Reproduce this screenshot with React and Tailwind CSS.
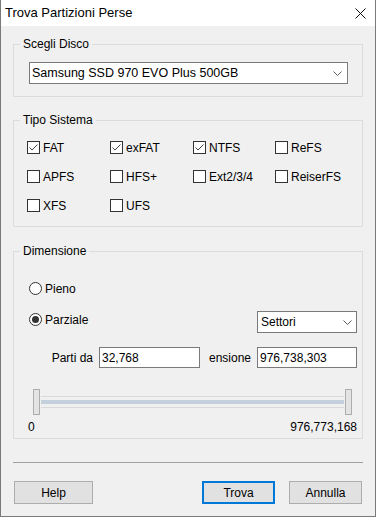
const filesystems = [
  { name: "FAT", checked: true },
  { name: "exFAT", checked: true },
  { name: "NTFS", checked: true },
  { name: "ReFS", checked: false },
  { name: "APFS", checked: false },
  { name: "HFS+", checked: false },
  { name: "Ext2/3/4", checked: false },
  { name: "ReiserFS", checked: false },
  { name: "XFS", checked: false },
  { name: "UFS", checked: false }
]

function Chevron() {
  return (
    <svg width="9" height="5" viewBox="0 0 9 5" className="shrink-0">
      <path d="M0.5 0.5 L4.5 4.5 L8.5 0.5" fill="none" stroke="#5a5a5a" strokeWidth="1" />
    </svg>
  )
}

// fieldset keeps the legend cutting the border; padding goes on the inner div
function Group({ title, className, inner, children }) {
  return (
    <fieldset className={"border border-[#dcdcdc] " + className}>
      <legend className="ml-[6px] px-[3px] h-[16px] leading-[16px] text-[12px] text-black">
        {title}
      </legend>
      <div className={inner}>{children}</div>
    </fieldset>
  )
}

function Check({ label, checked }) {
  return (
    <div className="flex items-center h-[13px]">
      <span className="w-[13px] h-[13px] border border-[#333] bg-white flex items-center justify-center shrink-0">
        {checked && (
          <svg width="11" height="11" viewBox="0 0 11 11">
            <path d="M1.5 5.5 L4 8 L9.5 2.5" fill="none" stroke="#444" strokeWidth="1" />
          </svg>
        )}
      </span>
      <span className="ml-[3px] text-[12px] leading-[16px]">{label}</span>
    </div>
  )
}

function Radio({ label, checked }) {
  return (
    <div className="flex items-center h-[13px]">
      <span className="w-[13px] h-[13px] rounded-full border border-[#333] bg-white flex items-center justify-center shrink-0">
        {checked && <span className="w-[7px] h-[7px] rounded-full bg-[#333]"></span>}
      </span>
      <span className="ml-[3px] text-[12px] leading-[16px]">{label}</span>
    </div>
  )
}

export default function App() {
  return (
    <div className="w-[376px] h-[517px] flex flex-col border-x border-b border-[#7a7a7a] bg-[#f0f0f0] text-black font-['Liberation_Sans',Arial,sans-serif] select-none">
      {/* Title bar */}
      <div className="h-[26px] bg-white flex items-center justify-between pl-[4px] pr-[9px] shrink-0">
        <span className="text-[13px] leading-[16px]">Trova Partizioni Perse</span>
        <svg width="11" height="11" viewBox="0 0 11 11">
          <path d="M0.5 0.5 L10.5 10.5 M10.5 0.5 L0.5 10.5" stroke="#111" strokeWidth="1" />
        </svg>
      </div>

      <div className="flex flex-col px-[12px]">
        {/* Scegli Disco */}
        <Group title="Scegli Disco" className="mt-[10px]" inner="pl-[15px] pr-[14px] pb-[12px]">
          <div className="mt-[10px] h-[22px] border border-[#7a7a7a] bg-white flex items-center justify-between pl-[2px] pr-[5px]">
            <span className="text-[12.5px]">Samsung SSD 970 EVO Plus 500GB</span>
            <Chevron />
          </div>
        </Group>

        {/* Tipo Sistema */}
        <Group title="Tipo Sistema" className="mt-[15px]" inner="pl-[13px] pb-[14px]">
          <div className="mt-[13px] grid grid-cols-[83px_83px_82px_auto] gap-y-[16px]">
            {filesystems.map((fs) => (
              <Check key={fs.name} label={fs.name} checked={fs.checked} />
            ))}
          </div>
        </Group>

        {/* Dimensione */}
        <Group title="Dimensione" className="mt-[16px]" inner="pl-[15px] pr-[5px] pb-[3px]">
          <div className="mt-[23px]">
            <Radio label="Pieno" />
          </div>

          <div className="mt-[16px] flex items-start justify-between">
            <div className="mt-[2px]">
              <Radio label="Parziale" checked />
            </div>
            <div className="w-[100px] h-[22px] border border-[#7a7a7a] bg-white flex items-center justify-between pl-[3px] pr-[4px]">
              <span className="text-[12px]">Settori</span>
              <Chevron />
            </div>
          </div>

          <div className="mt-[14px] flex items-center h-[21px] text-[12px]">
            <span className="w-[64px] text-right">Parti da</span>
            <div className="ml-[6px] w-[101px] h-[21px] border border-[#7a7a7a] bg-white flex items-center pl-[2px]">
              32,768
            </div>
            <span className="w-[51px] text-right">ensione</span>
            <div className="ml-[6px] w-[100px] h-[21px] border border-[#7a7a7a] bg-white flex items-center pl-[2px]">
              976,738,303
            </div>
          </div>

          {/* Slider */}
          <div className="mt-[21px] ml-[4px] mr-[5px] flex items-start h-[26px]">
            <span className="w-[7px] h-[26px] bg-[#e3e3e3] border border-[#adadad] shrink-0"></span>
            <div className="flex-1 mx-[1px] mt-[7px] flex flex-col">
              <span className="h-[1px] bg-[#d9d9d9]"></span>
              <span className="mt-[3px] h-[4px] bg-[#c4d0dc]"></span>
              <span className="mt-[3px] h-[1px] bg-[#d9d9d9]"></span>
            </div>
            <span className="w-[7px] h-[26px] bg-[#e3e3e3] border border-[#adadad] shrink-0"></span>
          </div>

          <div className="mt-[4px] -ml-[1px] flex justify-between text-[12px] leading-[16px]">
            <span>0</span>
            <span>976,773,168</span>
          </div>
        </Group>

        <div className="mt-[23px] h-[1px] bg-[#a0a0a0]"></div>

        {/* Buttons */}
        <div className="mt-[18px] flex items-center text-[12px]">
          <button className="ml-[1px] w-[79px] h-[23px] bg-[#e1e1e1] border border-[#adadad]">Help</button>
          <div className="flex-1"></div>
          <button className="w-[73px] h-[23px] bg-[#e1e1e1] border-2 border-[#0078d7]">Trova</button>
          <button className="ml-[14px] mr-[1px] w-[73px] h-[23px] bg-[#e1e1e1] border border-[#adadad]">Annulla</button>
        </div>
      </div>
    </div>
  )
}
